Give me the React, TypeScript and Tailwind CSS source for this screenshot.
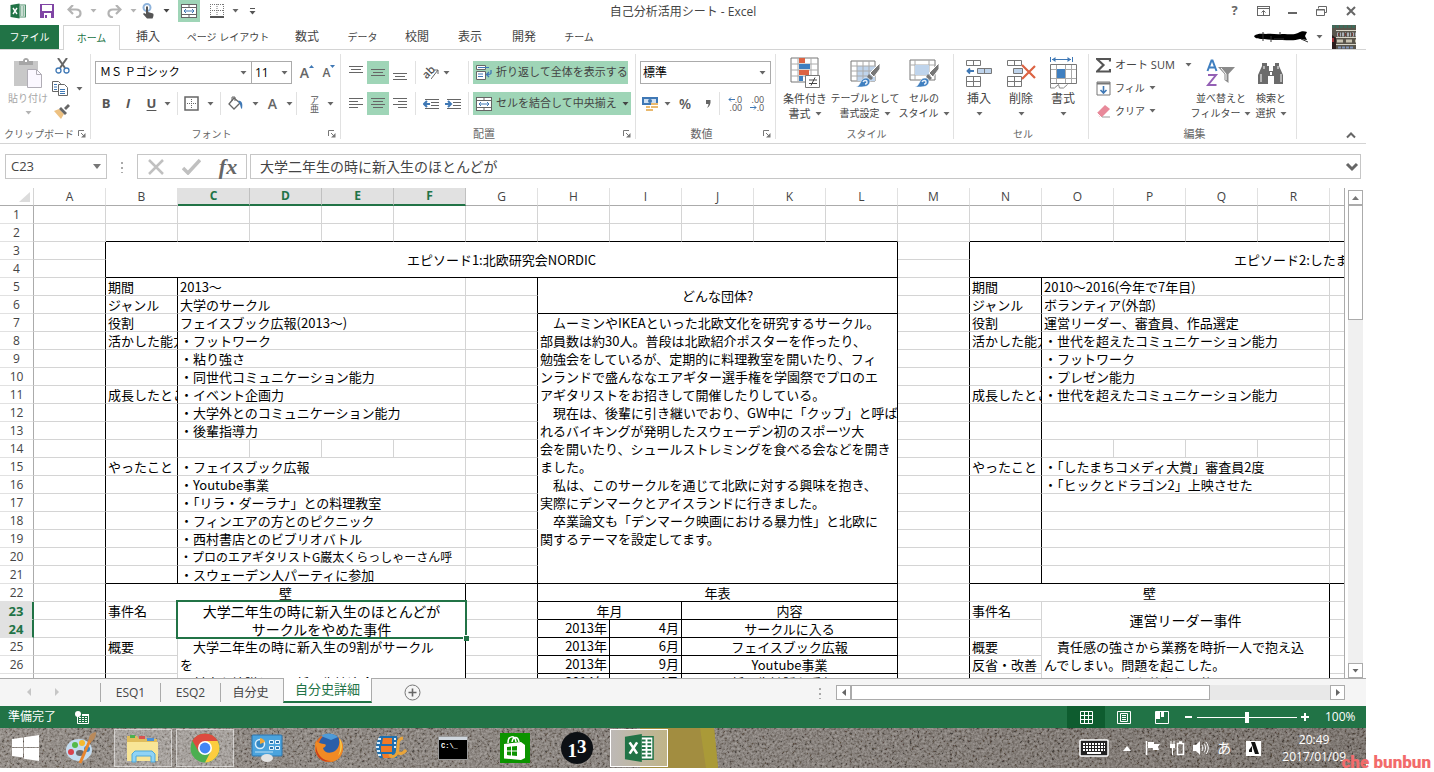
import type { ReactNode } from 'react';
import clsx from 'clsx';

const COLS = 'ABCDEFGHIJKLMNOPQRS'.split('');
const ROW_COUNT = 27;
const ROW_H = 18;

interface CellData {
  at: string;
  text: string;
  cols?: number;
  rows?: number;
  className?: string;
}

const about = [
  '　ムーミンやIKEAといった北欧文化を研究するサークル。',
  '部員数は約30人。普段は北欧紹介ポスターを作ったり、',
  '勉強会をしているが、定期的に料理教室を開いたり、フィ',
  'ンランドで盛んななエアギター選手権を学園祭でプロのエ',
  'アギタリストをお招きして開催したりしている。',
  '　現在は、後輩に引き継いでおり、GW中に「クッブ」と呼ば',
  'れるバイキングが発明したスウェーデン初のスポーツ大',
  '会を開いたり、シュールストレミングを食べる会などを開き',
  'ました。',
  '　私は、このサークルを通じて北欧に対する興味を抱き、',
  '実際にデンマークとアイスランドに行きました。',
  '　卒業論文も「デンマーク映画における暴力性」と北欧に',
  '関するテーマを設定してます。',
].join('\n');

const C = 'justify-center items-center text-center';
const R = 'justify-end items-end';

// Column C and column O hold one merged line per row
const episode1: [number, string][] = [
  [5, '2013～'],
  [6, '大学のサークル'],
  [7, 'フェイスブック広報(2013～)'],
  [8, '・フットワーク'],
  [9, '・粘り強さ'],
  [10, '・同世代コミュニケーション能力'],
  [11, '・イベント企画力'],
  [12, '・大学外とのコミュニケーション能力'],
  [13, '・後輩指導力'],
  [15, '・フェイスブック広報'],
  [16, '・Youtube事業'],
  [17, '・「リラ・ダーラナ」との料理教室'],
  [18, '・フィンエアの方とのピクニック'],
  [19, '・西村書店とのビブリオバトル'],
  [21, '・スウェーデン人パーティに参加'],
];

const episode2: [number, string][] = [
  [5, '2010～2016(今年で7年目)'],
  [6, 'ボランティア(外部)'],
  [7, '運営リーダー、審査員、作品選定'],
  [8, '・世代を超えたコミュニケーション能力'],
  [9, '・フットワーク'],
  [10, '・プレゼン能力'],
  [11, '・世代を超えたコミュニケーション能力'],
  [12, ''],
  [13, ''],
  [15, '・「したまちコメディ大賞」審査員2度'],
  [16, '・「ヒックとドラゴン2」上映させた'],
  [17, ''],
  [18, ''],
  [19, ''],
  [20, ''],
  [21, ''],
];

const labels: [number, string][] = [
  [5, '期間'],
  [6, 'ジャンル'],
  [7, '役割'],
  [8, '活かした能力'],
  [11, '成長したところ'],
  [15, 'やったこと'],
  [23, '事件名'],
  [25, '概要'],
];

const cells: CellData[] = [
  { at: 'B3', text: 'エピソード1:北欧研究会NORDIC', cols: 11, rows: 2, className: C },
  { at: 'N3', text: 'エピソード2:したま', cols: 6, rows: 2, className: 'items-center pl-[264px]' },
  { at: 'H5', text: 'どんな団体?', cols: 5, rows: 2, className: C },
  { at: 'H7', text: about, cols: 5, rows: 15 },
  { at: 'C20', text: '・プロのエアギタリストG巌太くらっしゃーさん呼', cols: 4, className: 'text-[12px]' },
  { at: 'B22', text: '壁', cols: 5, className: C },
  { at: 'H22', text: '年表', cols: 5, className: C },
  { at: 'N22', text: '壁', cols: 5, className: C },
  { at: 'C23', text: '大学二年生の時に新入生のほとんどが\nサークルをやめた事件', cols: 4, rows: 2, className: `${C} text-[14px]` },
  { at: 'O23', text: '運営リーダー事件', cols: 4, rows: 2, className: `${C} text-[14px]` },
  { at: 'C25', text: '　大学二年生の時に新入生の9割がサークル\nを\n　対応を協議して、新入生歓迎会', cols: 4, rows: 3 },
  { at: 'O25', text: '　責任感の強さから業務を時折一人で抱え込\nんでしまい。問題を起こした。\n　ある日問題点を共有し、仲間に', cols: 4, rows: 3 },
  { at: 'N26', text: '反省・改善' },
  { at: 'H23', text: '年月', cols: 2, className: C },
  { at: 'J23', text: '内容', cols: 3, className: C },
  ...[
    ['2013年', '4月', 'サークルに入る'],
    ['2013年', '6月', 'フェイスブック広報'],
    ['2013年', '9月', 'Youtube事業'],
    ['2014年', '4月', '新入生勧誘お手伝い'],
  ].flatMap(([year, month, what], i) => [
    { at: `H${24 + i}`, text: year, className: R },
    { at: `I${24 + i}`, text: month, className: R },
    { at: `J${24 + i}`, text: what, cols: 3, className: C },
  ]),
  ...labels.flatMap(([row, text]) => [
    { at: `B${row}`, text },
    { at: `N${row}`, text },
  ]),
  ...episode1.map(([row, text]) => ({ at: `C${row}`, text, cols: 4 })),
  ...episode2.map(([row, text]) => ({ at: `O${row}`, text, cols: 4 })),
];

// Black outlines: [first column, first row, last column, last row]
const outlines: [string, number, string, number][] = [
  ['B', 3, 'L', 4],
  ['B', 5, 'B', 21],
  ['B', 5, 'L', 21],
  ['H', 5, 'L', 6],
  ['H', 7, 'L', 21],
  ['B', 22, 'F', 40],
  ['H', 22, 'L', 22],
  ['H', 23, 'I', 23],
  ['J', 23, 'L', 23],
  ...[24, 25, 26, 27].flatMap((r): [string, number, string, number][] => [
    ['H', r, 'H', r],
    ['I', r, 'I', r],
    ['J', r, 'L', r],
  ]),
  ['N', 3, 'Z', 4],
  ['N', 5, 'N', 21],
  ['N', 5, 'Z', 21],
  ['N', 22, 'R', 40],
];

const colIndex = (letter: string) => letter.charCodeAt(0) - 65;
const cellMap = new Map(cells.map((c) => [c.at, c]));
const covered = new Set<string>();
cells.forEach((c) => {
  const col = colIndex(c.at[0]);
  const row = Number(c.at.slice(1));
  for (let r = row; r < row + (c.rows ?? 1); r++) {
    for (let k = col; k < col + (c.cols ?? 1); k++) {
      if (r !== row || k !== col) covered.add(`${COLS[k]}${r}`);
    }
  }
});

function hasRightLine(col: number, row: number) {
  return outlines.some(([c1, r1, c2, r2]) => row >= r1 && row <= r2 && (colIndex(c2) === col || colIndex(c1) === col + 1));
}

function hasBottomLine(col: number, row: number) {
  return outlines.some(([c1, r1, c2, r2]) => col >= colIndex(c1) && col <= colIndex(c2) && (r2 === row || r1 === row + 1));
}

function Caret({ className = 'text-[#666]' }: { className?: string }) {
  return (
    <svg width="7" height="4" viewBox="0 0 7 4" className={clsx('shrink-0', className)}>
      <path d="M0.5 0h6L3.5 3.6z" fill="currentColor" />
    </svg>
  );
}

function Svg({ w = 16, h = 16, box, children, className }: { w?: number; h?: number; box?: string; children: ReactNode; className?: string }) {
  return (
    <svg width={w} height={h} viewBox={box ?? `0 0 ${w} ${h}`} fill="none" className={clsx('shrink-0', className)}>
      {children}
    </svg>
  );
}

function ExcelLogo({ size }: { size: number }) {
  return (
    <Svg w={size} h={size} box="0 0 32 32">
      <rect x="17" y="4" width="14" height="24" fill="#fff" stroke="#217346" strokeWidth="1.6" />
      <path d="M19 8h4M25 8h4M19 12h4M25 12h4M19 16h4M25 16h4M19 20h4M25 20h4M19 24h4M25 24h4" stroke="#217346" strokeWidth="2" />
      <path d="M1 4l18-3v30L1 28z" fill="#217346" />
      <path d="M6 10l8 12M14 10L6 22" stroke="#fff" strokeWidth="2.8" />
    </Svg>
  );
}

function MergeIcon() {
  return (
    <Svg>
      <rect x="0.5" y="1.5" width="15" height="13" fill="#fff" stroke="#666" />
      <path d="M0 4.5h16M0 11.5h16M8 1v3M8 12v3" stroke="#666" />
      <path d="M3 8h10M5 6L3 8l2 2M11 6l2 2-2 2" stroke="#3f78b5" />
    </Svg>
  );
}

function QuickButton({ label, className, children }: { label: string; className: string; children: ReactNode }) {
  return (
    <button type="button" aria-label={label} className={clsx('flex h-[22px] items-center justify-center', className)}>
      {children}
    </button>
  );
}

function TitleBar() {
  return (
    <header className="grid h-[25px] grid-cols-[1fr_auto_1fr] items-start">
      <div className="flex items-center">
        <div className="flex w-9 justify-center"><ExcelLogo size={16} /></div>
        <QuickButton label="上書き保存" className="w-[22px]">
          <Svg w={14} h={14}>
            <path d="M0 0h14v14H0z" fill="#8045a5" />
            <path d="M2 1h10v6H2zM4 9h7v5H4z" fill="#fff" />
            <path d="M5 11h2v3H5z" fill="#8045a5" />
          </Svg>
        </QuickButton>
        <QuickButton label="元に戻す" className="ml-2 w-8 gap-2">
          <Svg w={15} h={13}>
            <path d="M6 0L1.500 4.500 6 9M2 4.500h7c6 0 6 7 0 8" stroke="#b3b3b3" strokeWidth="2.200" />
          </Svg>
          <Caret className="text-[#b3b3b3]" />
        </QuickButton>
        <QuickButton label="やり直し" className="ml-2 w-8 gap-2">
          <Svg w={15} h={13}>
            <path d="M9 0l4.500 4.500L9 9M13 4.500H6c-6 0-6 7 0 8" stroke="#b3b3b3" strokeWidth="2.200" />
          </Svg>
          <Caret className="text-[#b3b3b3]" />
        </QuickButton>
        <QuickButton label="タッチ/マウス" className="ml-1 w-7 gap-2">
          <Svg w={13} h={16}>
            <circle cx="5" cy="4.500" r="3.500" stroke="#8fb4dc" strokeWidth="2" />
            <path d="M4 3.500h2V9l5 1.500c1 .5.500 3-.5 5H5L1 11l1-1 2 1z" fill="#555" />
          </Svg>
          <Caret className="text-[#444]" />
        </QuickButton>
        <QuickButton label="セルを結合して中央揃え" className="ml-2 w-[22px] bg-[#9fd5b7]"><MergeIcon /></QuickButton>
        <QuickButton label="罫線" className="ml-2 w-8 gap-2">
          <Svg w={14} h={14}>
            <path d="M.5 0v13M13.500 0v13M7 0v13M0 .5h14M0 6.500h14" stroke="#777" strokeDasharray="1 1" />
            <path d="M0 13h14" stroke="#555" strokeWidth="2" />
          </Svg>
          <Caret />
        </QuickButton>
        <QuickButton label="クイック アクセス ツール バーのユーザー設定" className="w-6">
          <Svg w={7} h={8}>
            <path d="M1 1.500h5" stroke="#555" />
            <path d="M.5 4h6l-3 3.500z" fill="#555" />
          </Svg>
        </QuickButton>
      </div>
      <h1 className="pt-1 text-[12px] leading-4 text-[#444]">自己分析活用シート - Excel</h1>
      <div className="flex justify-end pr-px text-[#666]">
        <QuickButton label="ヘルプ" className="w-[29px] text-[13px] font-bold">?</QuickButton>
        <QuickButton label="リボンの表示オプション" className="w-[29px]">
          <Svg w={13} h={10}>
            <rect x="0.5" y="0.5" width="12" height="9" stroke="currentColor" />
            <path d="M0 2.500h13M6.500 9V5M4.500 6.500l2-2 2 2" stroke="currentColor" />
          </Svg>
        </QuickButton>
        <QuickButton label="最小化" className="w-[29px]"><Svg w={9} h={6}><path d="M0 5h9" stroke="currentColor" strokeWidth="2" /></Svg></QuickButton>
        <QuickButton label="元に戻す (縮小)" className="w-[29px]">
          <Svg w={11} h={10}>
            <path d="M2.500 2.500v-2h8v6h-2M.5 3.500h8v6h-8z" stroke="currentColor" />
            <path d="M0 4h9" stroke="currentColor" />
          </Svg>
        </QuickButton>
        <QuickButton label="閉じる" className="w-[29px]"><Svg w={10} h={10}><path d="M1 1l8 8M9 1L1 9" stroke="currentColor" strokeWidth="2" /></Svg></QuickButton>
      </div>
    </header>
  );
}

const ribbonTabs = [
  { name: '挿入', className: 'w-[56px] text-[12px]' },
  { name: 'ページ レイアウト', className: 'w-[104px] text-[10px]' },
  { name: '数式', className: 'w-[54px] text-[12px]' },
  { name: 'データ', className: 'w-[57px] text-[10px]' },
  { name: '校閲', className: 'w-[52px] text-[12px]' },
  { name: '表示', className: 'w-[54px] text-[12px]' },
  { name: '開発', className: 'w-[54px] text-[12px]' },
  { name: 'チーム', className: 'w-[56px] text-[10px]' },
];

function RibbonTabs() {
  return (
    <nav className="flex h-[25px] border-b border-[#d4d4d4]">
      <button type="button" className="w-[59px] bg-[#217346] text-[10px] text-white">ファイル</button>
      <button type="button" className="relative z-10 -mb-px ml-1 w-[57px] border border-b-0 border-[#d4d4d4] bg-white text-[10px] text-[#217346]">ホーム</button>
      {ribbonTabs.map((tab) => (
        <button key={tab.name} type="button" className={clsx('whitespace-nowrap', tab.className)}>{tab.name}</button>
      ))}
      <div className="ml-auto flex items-center gap-[7px] pr-[10px]">
        <Svg w={56} h={14}>
          <path d="M1 6c4-3 8-2 12-2 6-1 10 1 16 0 8 0 12 1 16-1 3-2 6-2 9-1l-2 4 2 4-7-1c-6 2-12 1-18 1-6 0-12 0-18-1-4 0-9 0-10-3z" fill="#000" />
          <path d="M10 2v9M18 6v6M21 9h10M27 2v3M48 9l7 3" stroke="#333" />
        </Svg>
        <Caret />
        <Svg w={24} h={24} className="ml-[2px]">
          <path d="M0 0h24v24H0z" fill="#5a564c" />
          <path d="M0 1.500h24" stroke="#3f6a5a" strokeWidth="3" strokeDasharray="3 1" />
          <path d="M4 5.500h20M4 12.500h20M4 19.500h20" stroke="#d9d6c8" />
          <path d="M5 9.500h19" stroke="#a9b0b8" strokeWidth="4" strokeDasharray="2 1 1 1" />
          <path d="M6 9.500h17" stroke="#7c3f3a" strokeWidth="3" strokeDasharray="1 6" />
          <path d="M5 16h19" stroke="#c9c4b2" strokeWidth="3" strokeDasharray="6 3" />
          <path d="M0 10l4 3v11H0z" fill="#2b1d1c" />
          <path d="M6 22.500h16" stroke="#7f93b8" strokeWidth="2" strokeDasharray="3 1" />
          <path d="M1 13v4" stroke="#a33439" strokeWidth="2" />
        </Svg>
      </div>
    </nav>
  );
}

function Group({ title, className, launcher, small, children }: { title: string; className: string; launcher?: boolean; small?: boolean; children: ReactNode }) {
  return (
    <section className={clsx('my-1 flex flex-col border-r border-[#e1e1e1]', className)}>
      <div className="flex-1">{children}</div>
      <div className="flex h-[10px] items-center justify-center text-[#666]">
        <span className={clsx('flex-1 whitespace-nowrap text-center', small ? 'text-[10px]' : 'text-[11px]')}>{title}</span>
        {launcher && (
          <button type="button" aria-label={`${title}の設定`} className="mr-1">
            <Svg w={8} h={8}>
              <path d="M.5 6V.5H6M3 3l3 3" stroke="#777" />
              <path d="M7.500 3v4.500H3z" fill="#777" />
            </Svg>
          </button>
        )}
      </div>
    </section>
  );
}

function Divider() {
  return <span className="h-[23px] w-px bg-[#e1e1e1]" />;
}

function Tool({ label, className, children }: { label: string; className?: string; children: ReactNode }) {
  return (
    <button type="button" aria-label={label} className={clsx('flex h-[23px] items-center justify-center', className)}>
      {children}
    </button>
  );
}

function Lines({ d }: { d: string }) {
  return <Svg w={14} h={14}><path d={d} stroke="#666" /></Svg>;
}

function BigButton({ lines, icon, className }: { lines: string[]; icon: ReactNode; className: string }) {
  return (
    <button type="button" className={clsx('flex flex-col items-center whitespace-nowrap leading-[15px]', className)}>
      <span className="flex h-[37px] items-center">{icon}</span>
      <span>{lines[0]}</span>
      <span className="flex h-[15px] items-center gap-1">
        {lines[1]}
        <Caret />
      </span>
    </button>
  );
}

function Brush() {
  return (
    <>
      <path d="M31 6l-10 10 4 4 6-8z" fill="#777" stroke="#fff" />
      <path d="M20 17l4 4-2 2-4-3z" fill="#777" />
      <path d="M7 30c5-1 4-9 10-9 5 0 5 6 1 8-3 1-7 1-11 1z" fill="#3f7fc0" stroke="#fff" strokeWidth="0.500" />
      <path d="M14 25c1-2 4-2 4 0 0 1-1 2-2 2" stroke="#e6effa" strokeWidth="1.500" />
    </>
  );
}

function ClipboardGroup() {
  return (
    <Group title="クリップボード" className="w-[91px]" launcher small>
      <div className="flex">
        <button type="button" className="flex w-[52px] flex-col items-center pl-1 pt-1 text-[10px] text-[#a6a6a6]">
          <Svg w={30} h={31}>
            <path d="M1 3h24v25H1z" fill="#c8c8c8" />
            <path d="M6 7V3h4c0-4 6-4 6 0h4v4z" fill="#a6a6a6" />
            <path d="M12 2h2v2h-2z" fill="#fff" />
            <path d="M14.500 11.500h9l5 5v13h-14z" fill="#fbf8ff" stroke="#b0adb5" />
            <path d="M23.500 11.500v5h5" stroke="#b0adb5" />
          </Svg>
          <span className="leading-[18px]">貼り付け</span>
          <Caret className="mt-1 text-[#b3b3b3]" />
        </button>
        <div className="flex flex-col">
          <Tool label="切り取り" className="w-5">
            <Svg w={15} h={16}>
              <path d="M3 0l7 10M12 0L5 10" stroke="#666" strokeWidth="2" />
              <circle cx="3.500" cy="12.500" r="2.500" stroke="#3f78b5" strokeWidth="1.300" />
              <circle cx="11.500" cy="12.500" r="2.500" stroke="#3f78b5" strokeWidth="1.300" />
            </Svg>
          </Tool>
          <Tool label="コピー" className="w-[30px] gap-2">
            <Svg w={16} h={15}>
              <path d="M.5.5h6l2 2v8h-8z" fill="#fff" stroke="#666" />
              <path d="M6.500 3.500h6l3 3v8h-9z" fill="#fff" stroke="#666" />
              <path d="M2 3.500h3M2 6h3M2 8.500h3M8 8.500h5M8 10.500h5M8 12.500h5" stroke="#3f78b5" />
            </Svg>
            <Caret />
          </Tool>
          <Tool label="書式のコピー/貼り付け" className="w-5">
            <Svg w={16} h={15}>
              <path d="M0 7l5-2 5 5-3 5z" fill="#edc181" />
              <path d="M5 5l2-2 6 6-2 2zM10 4l4-4 2 2-4 4z" fill="#666" />
            </Svg>
          </Tool>
        </div>
      </div>
    </Group>
  );
}

function FontGroup() {
  return (
    <Group title="フォント" className="w-[250px] pl-1" launcher small>
      <div className="flex flex-col gap-2 pt-[7px]">
        <div className="flex items-center">
          <label className="flex h-[23px] w-[157px] items-center border border-[#ababab] px-1">
            <input aria-label="フォント" defaultValue="ＭＳ Ｐゴシック" className="w-full min-w-0 text-[11px] text-black outline-none" />
            <Caret />
          </label>
          <label className="-ml-px flex h-[23px] w-[41px] items-center border border-[#ababab] px-[3px]">
            <input aria-label="フォント サイズ" defaultValue="11" className="w-full min-w-0 text-[12px] text-black outline-none" />
            <Caret />
          </label>
          <Tool label="フォント サイズの拡大" className="ml-1 w-[22px] text-[14px] font-semibold text-[#666]">
            A<Svg w={5} h={3} className="mb-3"><path d="M0 3h5L2.500 0z" fill="#3f78b5" /></Svg>
          </Tool>
          <Tool label="フォント サイズの縮小" className="w-[22px] text-[12px] font-semibold text-[#666]">
            A<Svg w={5} h={3} className="mb-3"><path d="M0 0h5L2.500 3z" fill="#3f78b5" /></Svg>
          </Tool>
        </div>
        <div className="flex items-center text-[13px] text-[#555]">
          <Tool label="太字" className="w-[22px] font-bold">B</Tool>
          <Tool label="斜体" className="w-[22px] font-bold italic">I</Tool>
          <Tool label="下線" className="w-[36px] gap-2 pl-1 font-bold"><span className="underline underline-offset-2">U</span><Caret /></Tool>
          <span className="w-[2px]" />
          <Divider />
          <Tool label="罫線" className="w-[42px] gap-2">
            <Svg w={15} h={15}>
              <rect x="1" y="1" width="13" height="13" stroke="#666" strokeWidth="1.500" />
              <path d="M7.500 3v10M3 7.500h10" stroke="#666" strokeDasharray="1 1" />
            </Svg>
            <Caret />
          </Tool>
          <Divider />
          <Tool label="塗りつぶしの色" className="w-[44px] gap-2">
            <Svg w={16} h={15}>
              <path d="M6 2l6 5-6 6-5-5z" fill="#fff" stroke="#666" strokeWidth="1.300" />
              <path d="M4 5V1h3v4" stroke="#666" />
              <path d="M10 5c4-1 5 3 4 8-2-1-1-5-4-8z" fill="#3f78b5" />
            </Svg>
            <Caret />
          </Tool>
          <Tool label="フォントの色" className="w-[31px] gap-[9px] text-[14px] font-semibold text-[#666]">A<Caret /></Tool>
          <Divider />
          <Tool label="ふりがなの表示/非表示" className="w-[42px] gap-2 pl-2">
            <span className="flex flex-col text-[9px] leading-[9px]"><span>ア</span><span>亜</span></span>
            <Caret />
          </Tool>
        </div>
      </div>
    </Group>
  );
}

function AlignGroup() {
  return (
    <Group title="配置" className="w-[295px] pl-1" launcher>
      <div className="flex flex-col gap-2 pt-[7px]">
        <div className="flex items-center">
          <Tool label="上揃え" className="w-[22px]"><Lines d="M0 .5h14M2 3.500h10M0 6.500h14" /></Tool>
          <Tool label="上下中央揃え" className="w-[22px] bg-[#9fd5b7]"><Lines d="M0 3.500h14M2 6.500h10M0 9.500h14" /></Tool>
          <Tool label="下揃え" className="w-[22px]"><Lines d="M0 7.500h14M2 10.500h10M0 13.500h14" /></Tool>
          <span className="w-1" />
          <Divider />
          <Tool label="方向" className="w-[52px] gap-1 pr-3">
            <span className="-rotate-45 text-[11px] font-semibold text-[#555]">ab</span>
            <Svg w={8} h={14} className="-ml-2"><path d="M0 13l7-9M3 4h4v4" stroke="#666" /></Svg>
            <Caret />
          </Tool>
          <Divider />
          <button type="button" className="ml-1 flex h-[23px] w-[155px] items-center gap-1 whitespace-nowrap bg-[#9fd5b7] pl-[3px] text-[11px]">
            <Svg>
              <path d="M.5.5h9v4h-9zM.5 6.500h9v8h-9z" fill="#fff" stroke="#666" />
              <path d="M2 2.500h11M2 9h5M2 11.500h5" stroke="#3f78b5" />
              <path d="M15 5v3c0 1-1 1.500-4 1.500M13 7l-2.500 2.500L13 12" stroke="#3f78b5" strokeWidth="1.300" />
            </Svg>
            折り返して全体を表示する
          </button>
        </div>
        <div className="flex items-center">
          <Tool label="左揃え" className="w-[22px]"><Lines d="M0 1.500h14M0 4.500h9M0 7.500h14M0 10.500h9" /></Tool>
          <Tool label="中央揃え" className="w-[22px] bg-[#9fd5b7]"><Lines d="M0 1.500h14M2 4.500h10M0 7.500h14M2 10.500h10" /></Tool>
          <Tool label="右揃え" className="w-[22px]"><Lines d="M0 1.500h14M5 4.500h9M0 7.500h14M5 10.500h9" /></Tool>
          <span className="w-1" />
          <Divider />
          <Tool label="インデントを減らす" className="ml-1 w-[22px]">
            <Svg w={16} h={12}><path d="M2 1.500h14M8 4.500h8M8 7.500h8M2 10.500h14" stroke="#666" /><path d="M7 6H1M4 3L1 6l3 3" stroke="#3f78b5" strokeWidth="2" /></Svg>
          </Tool>
          <Tool label="インデントを増やす" className="w-[22px]">
            <Svg w={16} h={12}><path d="M2 1.500h14M8 4.500h8M8 7.500h8M2 10.500h14" stroke="#666" /><path d="M0 6h6M3 3l3 3-3 3" stroke="#3f78b5" strokeWidth="2" /></Svg>
          </Tool>
          <span className="w-1" />
          <Divider />
          <button type="button" className="ml-1 flex h-[23px] w-[158px] items-center gap-1 whitespace-nowrap bg-[#9fd5b7] pl-[3px] text-[11px]">
            <MergeIcon />
            セルを結合して中央揃え
            <Caret className="ml-px text-[#444]" />
          </button>
        </div>
      </div>
    </Group>
  );
}

function NumberGroup() {
  return (
    <Group title="数値" className="w-[140px] pl-1" launcher>
      <div className="flex flex-col gap-2 pt-[7px]">
        <div className="flex h-[23px] w-[131px] items-center border border-[#ababab] pr-1">
          <select aria-label="表示形式" className="w-full appearance-none pl-[2px] text-[12px] text-black outline-none">
            <option>標準</option>
          </select>
          <Caret />
        </div>
        <div className="flex items-center text-[#555]">
          <Tool label="通貨表示形式" className="w-[33px] gap-[5px]">
            <Svg w={17} h={16}>
              <path d="M0 1h16v8H0z" fill="#3f78b5" />
              <path d="M2 3h12v4H2z" fill="#cfe0f2" />
              <circle cx="8" cy="5" r="2" fill="#3f78b5" />
              <path d="M9 7h7v2H9zM9 10h7v2H9zM4 10h4v2H4zM4 13h7v2H4z" fill="#e9b96e" />
            </Svg>
            <Caret />
          </Tool>
          <Tool label="パーセント スタイル" className="w-6 text-[14px] font-semibold">%</Tool>
          <Tool label="桁区切りスタイル" className="w-[22px]">
            <Svg w={5} h={8}><path d="M0 0h4.500c.500 4-1 6.500-3.500 8 1-2 1.500-3 1.500-4H0z" fill="#666" /></Svg>
          </Tool>
          <Divider />
          <Tool label="小数点以下の表示桁数を増やす" className="ml-1 w-[22px]">
            <span className="flex flex-col items-end text-[9px] leading-[8px]">
              <span className="flex items-center"><Svg w={7} h={5}><path d="M7 2.500H1M3 .5l-2 2 2 2" stroke="#3f78b5" /></Svg>.0</span>
              <span>.00</span>
            </span>
          </Tool>
          <Tool label="小数点以下の表示桁数を減らす" className="w-[22px]">
            <span className="flex flex-col items-end text-[9px] leading-[8px]">
              <span>.00</span>
              <span className="flex items-center"><Svg w={7} h={5}><path d="M0 2.500h6M4 .5l2 2-2 2" stroke="#3f78b5" /></Svg>.0</span>
            </span>
          </Tool>
        </div>
      </div>
    </Group>
  );
}

function StyleGroup() {
  return (
    <Group title="スタイル" className="w-[178px] pl-1" small>
      <div className="flex">
        <BigButton
          className="w-[50px] text-[11px]"
          lines={['条件付き', '書式']}
          icon={
            <Svg w={31} h={31}>
              <path d="M1 1h27v24H1z" fill="#fff" stroke="#777" />
              <path d="M1 7h27M1 13h27M1 19h27M8 1v24M21 1v24" stroke="#aaa" />
              <path d="M9 1h6v5H9zM9 13h10v5H9z" fill="#dc6343" />
              <path d="M9 7h11v5H9zM9 19h4v5H9z" fill="#3f7fc0" />
              <path d="M15.500 18.500h14v12h-14z" fill="#fff" stroke="#777" />
              <path d="M19 23h8M19 26.500h8M25 20.500l-4 8" stroke="#444" />
            </Svg>
          }
        />
        <BigButton
          className="w-[70px] text-[10px]"
          lines={['テーブルとして', '書式設定']}
          icon={
            <Svg w={32} h={32}>
              <path d="M2 4h24v20H2z" fill="#fff" stroke="#777" />
              <path d="M8 9h18v15H8z" fill="#bfd4ec" />
              <path d="M2 9h24M2 14h24M2 19h24M8 4v20M14 4v20M20 4v20" stroke="#aaa" />
              <Brush />
            </Svg>
          }
        />
        <BigButton
          className="w-[48px] text-[10px]"
          lines={['セルの', 'スタイル']}
          icon={
            <Svg w={32} h={32}>
              <path d="M2 3h25v20H2z" fill="#fff" stroke="#777" />
              <path d="M2 8h25M2 18h25M7 3v20M21 3v20" stroke="#aaa" />
              <path d="M7 8h14v10H7z" fill="#bfd4ec" />
              <Brush />
            </Svg>
          }
        />
      </div>
    </Group>
  );
}

function CellsGroup() {
  return (
    <Group title="セル" className="w-[135px] pl-1" small>
      <div className="flex">
        <BigButton
          className="w-[42px] text-[12px]"
          lines={['挿入', '']}
          icon={
            <Svg w={28} h={30}>
              <path d="M1.500 2.500h14v5h-14zM8.500 2.500v5M1.500 18.500h14v10h-14zM1.500 23.500h14M8.500 18.500v10" stroke="#777" />
              <path d="M12.500 10.500h14v5h-14z" fill="#bfd4ec" stroke="#777" />
              <path d="M19.500 10.500v5" stroke="#777" />
              <path d="M9 13H3M5 10.500L2.500 13 5 15.500" stroke="#3f78b5" strokeWidth="1.800" />
            </Svg>
          }
        />
        <BigButton
          className="w-[42px] text-[12px]"
          lines={['削除', '']}
          icon={
            <Svg w={30} h={30}>
              <path d="M1.500 2.500h14v5h-14zM8.500 2.500v5M1.500 18.500h14v10h-14zM1.500 23.500h14M8.500 18.500v10" stroke="#777" />
              <path d="M7.500 10.500h9v5h-9z" fill="#bfd4ec" stroke="#777" />
              <path d="M16 7l13 13M29 8L16 21" stroke="#dc6343" strokeWidth="2.200" />
            </Svg>
          }
        />
        <BigButton
          className="w-[42px] text-[12px]"
          lines={['書式', '']}
          icon={
            <Svg w={29} h={33}>
              <path d="M1.500 1v5M23.500 1v5M3 3.500h19" stroke="#3f78b5" />
              <path d="M3 3.500L6.500 1v5zM22 3.500L18.500 1v5z" fill="#3f78b5" />
              <path d="M1.500 8.500h26v19h-26z" fill="#fff" stroke="#777" />
              <path d="M2 13.500h25M2 22.500h25M7.500 9v18M16.500 9v18M22.500 9v18" stroke="#aaa" />
              <path d="M8 13h8v9H8z" fill="#3f7fc0" />
              <path d="M1.500 28v4h4l4-3.500 1 3.500h4l4-3.500" stroke="#888" />
            </Svg>
          }
        />
      </div>
    </Group>
  );
}

function EditGroup() {
  return (
    <Group title="編集" className="w-[208px] pl-1">
      <div className="flex">
        <div className="flex w-[100px] flex-col pl-[3px] text-[11px]">
          <button type="button" className="flex h-[22px] items-center gap-1">
            <Svg w={15} h={15}><path d="M14 3.500V1H1l6.500 6L1 13.500h13V11" stroke="#555" strokeWidth="2.200" /></Svg>
            <span className="w-[66px] whitespace-nowrap text-left">オート SUM</span>
            <Caret />
          </button>
          <button type="button" className="flex h-6 items-center gap-1">
            <Svg w={15} h={15}>
              <path d="M1 1h13v13H1z" fill="#fff" stroke="#777" />
              <path d="M1 2.500h13" stroke="#777" strokeWidth="2" />
              <path d="M7.500 5v7M4.500 9l3 3 3-3" stroke="#3f78b5" strokeWidth="1.600" />
            </Svg>
            <span className="text-[10px]">フィル</span>
            <Caret />
          </button>
          <button type="button" className="flex h-[22px] items-center gap-1">
            <Svg w={15} h={14}>
              <path d="M1 9l8-8 5 4-8 8H4z" fill="#e8899a" />
              <path d="M1 9l4 4" stroke="#fff" />
              <path d="M6 13h8" stroke="#999" />
            </Svg>
            <span className="text-[10px]">クリア</span>
            <Caret />
          </button>
        </div>
        <BigButton
          className="w-[56px] text-[10px]"
          lines={['並べ替えと', 'フィルター']}
          icon={
            <Svg w={30} h={28}>
              <path d="M1.500 12L5.500 1.500h1L10.500 12M3 8.500h6" stroke="#3f7fc0" strokeWidth="2" />
              <path d="M2 16h8L2 26h8.500" stroke="#9460b5" strokeWidth="2" />
              <path d="M12 8h17l-6.500 7v9l-4-3v-6z" fill="#8a8a8a" />
              <path d="M15 9l5 6v6" stroke="#fff" />
            </Svg>
          }
        />
        <BigButton
          className="w-[44px] text-[10px]"
          lines={['検索と', '選択']}
          icon={
            <Svg w={28} h={26}>
              <path d="M6 3h4v3h2v5h4V6h2V3h4v3l4 9v9h-9v-8h-6v8H1v-9l4-9V3z" fill="#6b6b6b" />
              <path d="M4 14v8M24 14v8M7 6v3M21 6v3" stroke="#fff" />
              <path d="M14 12v3" stroke="#fff" strokeWidth="2" />
            </Svg>
          }
        />
      </div>
    </Group>
  );
}

function FormulaBar() {
  return (
    <div className="flex h-[44px] items-center pl-[5px] pr-[5px] pt-px">
      <label className="flex h-[25px] w-[102px] items-center border border-[#c6c6c6] px-[5px]">
        <input aria-label="名前ボックス" defaultValue="C23" className="w-full min-w-0 text-[13px] outline-none" />
        <Svg w={8} h={5}><path d="M0 0h8L4 5z" fill="#777" /></Svg>
      </label>
      <Svg w={30} h={12}><path d="M15 1v11" stroke="#aaa" strokeWidth="2" strokeDasharray="2 3" /></Svg>
      <div className="flex h-[25px] w-[110px] items-center justify-around border border-[#c6c6c6]">
        <button type="button" aria-label="キャンセル">
          <Svg w={18} h={16}><path d="M2 1l14 14M16 1L2 15" stroke="#c0c0c0" strokeWidth="2.500" /></Svg>
        </button>
        <button type="button" aria-label="入力">
          <Svg w={19} h={16}><path d="M1 9l5 5L18 1" stroke="#c0c0c0" strokeWidth="3.500" /></Svg>
        </button>
        <button type="button" aria-label="関数の挿入" className="font-['Liberation_Serif',serif] text-[22px] font-bold italic leading-5 text-[#666]">fx</button>
      </div>
      <label className="ml-[3px] flex h-[25px] flex-1 items-center border border-[#c6c6c6] pl-[9px]">
        <input aria-label="数式バー" defaultValue="大学二年生の時に新入生のほとんどが" className="flex-1 text-[14px] outline-none" />
        <Svg w={14} h={10} className="mr-px"><path d="M2 2l5 5 5-5" stroke="#666" strokeWidth="3" /></Svg>
      </label>
    </div>
  );
}

function SheetCell({ col, row }: { col: number; row: number }) {
  const at = `${COLS[col]}${row}`;
  if (covered.has(at)) return null;
  const cell = cellMap.get(at);
  const colSpan = cell?.cols ?? 1;
  const rowSpan = cell?.rows ?? 1;
  const right = hasRightLine(col + colSpan - 1, row);
  const bottom = hasBottomLine(col, row + rowSpan - 1);

  return (
    <td
      colSpan={colSpan}
      rowSpan={rowSpan}
      className={clsx(
        'relative border-b border-r p-0',
        right ? 'border-r-black' : 'border-r-[#d4d4d4]',
        bottom ? 'border-b-black' : 'border-b-[#d4d4d4]',
      )}
    >
      {cell && (
        <div
          className={clsx('flex overflow-hidden whitespace-pre px-[2px] leading-[18px]', cell.className)}
          style={{ height: rowSpan * ROW_H - 1 }}
        >
          {cell.text}
        </div>
      )}
      {at === 'C23' && (
        <span className="absolute -inset-[2px] z-10 border-2 border-[#217346]">
          <span className="absolute -bottom-1 -right-1 size-[6px] border-l border-t border-white bg-[#217346]" />
        </span>
      )}
    </td>
  );
}

function Sheet() {
  return (
    <main className="flex min-h-0 flex-1">
      <div className="min-w-0 flex-1 overflow-hidden">
        <table className="w-[1402px] table-fixed border-separate border-spacing-0 font-['Noto_Sans_CJK_JP',sans-serif] text-[13px] text-black">
          <colgroup>
            <col className="w-[34px]" />
            {COLS.map((c) => <col key={c} className="w-[72px]" />)}
          </colgroup>
          <thead>
            <tr className="h-[18px] font-['Open_Sans',sans-serif] text-[12px] leading-4 text-[#444]">
              <th className="border-b border-r border-b-[#ababab] border-r-[#d4d4d4] p-0" aria-label="すべて選択">
                <Svg w={11} h={10} className="ml-[19px]"><path d="M11 0v10H0z" fill="#dcdcdc" /></Svg>
              </th>
              {COLS.map((c) => {
                const selected = c >= 'C' && c <= 'F';
                return (
                  <th
                    key={c}
                    scope="col"
                    className={clsx(
                      'h-[18px] border-r p-0',
                      selected ? 'border-b-2 border-b-[#217346] border-r-[#c0c0c0] bg-[#e1e1e1] font-bold text-[#217346]' : 'border-b border-b-[#ababab] border-r-[#e1e1e1] font-normal',
                    )}
                  >
                    <div className="h-4 overflow-hidden">{c === 'S' ? '' : c}</div>
                  </th>
                );
              })}
            </tr>
          </thead>
          <tbody>
            {Array.from({ length: ROW_COUNT }, (_, i) => i + 1).map((row) => {
              const selected = row === 23 || row === 24;
              return (
                <tr key={row} className="h-[18px]">
                  <th
                    scope="row"
                    className={clsx(
                      "h-[18px] border-b border-b-[#e1e1e1] p-0 font-['Open_Sans',sans-serif] leading-4",
                      selected ? 'border-r-2 border-r-[#217346] bg-[#e1e1e1] text-[13px] font-bold text-[#217346]' : 'border-r border-r-[#ababab] text-[12px] font-normal text-[#444]',
                    )}
                  >
                    <div className="h-[17px] pt-px">{row}</div>
                  </th>
                  {COLS.map((c, col) => <SheetCell key={c} col={col} row={row} />)}
                </tr>
              );
            })}
          </tbody>
        </table>
      </div>
      <div className="flex w-[22px] flex-col border-l border-[#ababab] pl-[3px] pr-[3px] pt-[2px]">
        <button type="button" aria-label="上へスクロール" className="flex h-[15px] items-center justify-center border border-[#ababab]">
          <Svg w={7} h={4}><path d="M0 4h7L3.500 0z" fill="#777" /></Svg>
        </button>
        <div className="flex-1 bg-[#f0f0f0]"><div className="h-[115px] border border-[#ababab] bg-white" /></div>
        <button type="button" aria-label="下へスクロール" className="flex h-[15px] items-center justify-center border border-[#ababab]"><Caret /></button>
      </div>
    </main>
  );
}

function SheetTabs() {
  return (
    <div className="flex h-7 items-start border-t border-[#ababab] bg-[#f5f5f5] text-[12px] text-[#444]">
      <button type="button" aria-label="前のシート" className="flex h-[25px] w-[43px] items-center justify-end pr-3"><Svg w={4} h={8}><path d="M4 0v8L0 4z" fill="#c6c6c6" /></Svg></button>
      <button type="button" aria-label="次のシート" className="flex h-[25px] w-[57px] items-center pl-3"><Svg w={4} h={8}><path d="M0 0v8l4-4z" fill="#c6c6c6" /></Svg></button>
      {['ESQ1', 'ESQ2', '自分史'].map((name) => (
        <button key={name} type="button" className="mt-1 h-[19px] w-[60px] border-l border-[#ababab]">{name}</button>
      ))}
      <button type="button" className="-mt-px ml-[3px] h-[25px] w-[89px] border-x border-b-2 border-x-[#ababab] border-b-[#217346] bg-white text-[13px] text-[#217346]">自分史詳細</button>
      <button type="button" aria-label="新しいシート" className="ml-8 mt-[5px]">
        <Svg w={17} h={17}><circle cx="8.500" cy="8.500" r="7.500" stroke="#777" /><path d="M4.500 8.500h8M8.500 4.500v8" stroke="#666" strokeWidth="1.600" /></Svg>
      </button>
      <div className="ml-auto mr-[21px] mt-[6px] flex w-[527px] items-center">
        <Svg w={18} h={12}><path d="M2 1v11" stroke="#aaa" strokeWidth="2" strokeDasharray="2 3" /></Svg>
        <button type="button" aria-label="左へスクロール" className="flex size-[15px] items-center justify-center border border-[#ababab] bg-white"><Svg w={4} h={7}><path d="M4 0v7L0 3.500z" fill="#666" /></Svg></button>
        <div className="h-[15px] flex-1 bg-[#e8e8e8]"><div className="h-full w-3/4 border border-[#ababab] bg-white" /></div>
        <button type="button" aria-label="右へスクロール" className="flex size-[15px] items-center justify-center border border-[#ababab] bg-white"><Svg w={4} h={7}><path d="M0 0v7l4-3.500z" fill="#666" /></Svg></button>
      </div>
    </div>
  );
}

function StatusBar() {
  return (
    <div className="flex h-[22px] items-center bg-[#217346] pl-2 pr-2 text-[12px] text-white">
      <span>準備完了</span>
      <Svg w={14} h={13} className="ml-[19px]">
        <path d="M2.500 4v8.500h11v-9H7" stroke="#fff" />
        <path d="M4 6.500h9M4 8.500h9M4 10.500h9" stroke="#fff" strokeDasharray="2 1" />
        <path d="M7 3h7v2H7z" fill="#fff" />
        <circle cx="3" cy="3" r="3" fill="#fff" />
      </Svg>
      <div className="ml-auto flex h-full items-center">
        <button type="button" aria-label="標準" className="flex h-full w-[38px] items-center justify-center bg-[#0e5c2f]">
          <Svg w={13} h={13}><path d="M.5.5h12v12H.5zM.5 4.500h12M.5 8.500h12M4.500.5v12M8.500.5v12" stroke="#fff" /></Svg>
        </button>
        <button type="button" aria-label="ページ レイアウト" className="flex h-full w-[38px] items-center justify-center">
          <Svg w={14} h={13}><path d="M.5.5h13v12H.5zM3.500 2.500h7v8h-7zM5 4.500h4M5 6.500h4M5 8.500h4" stroke="#fff" /></Svg>
        </button>
        <button type="button" aria-label="改ページ プレビュー" className="flex h-full w-[38px] items-center justify-center">
          <Svg w={14} h={13}><path d="M.5.5h13v12H.5z" stroke="#fff" /><path d="M1 1h4v7H1zM6 1h3v5H6z" fill="#fff" /></Svg>
        </button>
        <button type="button" aria-label="縮小" className="mx-px flex w-3 justify-center"><Svg w={7} h={8}><path d="M0 4h7" stroke="#fff" strokeWidth="2" /></Svg></button>
        <input
          type="range"
          aria-label="ズーム"
          defaultValue={50}
          className="ml-[2px] h-px w-[100px] appearance-none bg-white [&::-webkit-slider-thumb]:h-[11px] [&::-webkit-slider-thumb]:w-1 [&::-webkit-slider-thumb]:appearance-none [&::-webkit-slider-thumb]:bg-white"
        />
        <button type="button" aria-label="拡大" className="ml-1 flex w-2 justify-center"><Svg w={8} h={8}><path d="M0 4h8M4 0v8" stroke="#fff" strokeWidth="2" /></Svg></button>
        <span className="ml-4 w-[33px] text-[12px]">100%</span>
      </div>
    </div>
  );
}

const taskItems: { name: string; open?: boolean; icon: ReactNode }[] = [
  {
    name: 'ペイント',
    icon: (
      <Svg w={32} h={32}>
        <ellipse cx="14" cy="18" rx="13" ry="11" fill="#c4dcef" />
        <ellipse cx="15" cy="21" rx="4" ry="3" fill="#6c6a6c" />
        <circle cx="6" cy="20" r="3" fill="#d9434c" />
        <circle cx="10" cy="13" r="3" fill="#54b948" />
        <circle cx="17" cy="11" r="3" fill="#f5b92f" />
        <circle cx="22" cy="17" r="3" fill="#3b82c4" />
        <path d="M26 6L15 31" stroke="#e8862e" strokeWidth="3" />
        <path d="M24 8c0-5 2-7 7-8 0 5-2 8-5 10z" fill="#b98a5b" />
      </Svg>
    ),
  },
  {
    name: 'エクスプローラー',
    open: true,
    icon: (
      <Svg w={32} h={30}>
        <path d="M0 3h10l2 3h18v22H0z" fill="#e0bd5c" />
        <path d="M0 9h31v19H0z" fill="#f8e596" />
        <path d="M3 2h5v3H3z" fill="#4caf50" />
        <path d="M12 3h6v3h-6z" fill="#d9534f" />
        <path d="M20 5h7v3h-7z" fill="#4a90d9" />
        <path d="M5 29v-8l3-3h17l3 3v8h-4v-6H9v6z" fill="#8fd3f5" stroke="#4fa9d8" />
      </Svg>
    ),
  },
  {
    name: 'Google Chrome',
    open: true,
    icon: (
      <Svg w={30} h={30}>
        <circle cx="15" cy="15" r="14.500" fill="#4caf50" />
        <path d="M15 15L2.400 7.800A14.500 14.500 0 0 1 27.600 7.800z" fill="#dd4b3e" />
        <path d="M15 8h12.600A14.500 14.500 0 0 1 15 29.500L21 18z" fill="#fccd3f" />
        <path d="M2.400 7.800L9 19l6-4 0-7z" fill="#dd4b3e" />
        <circle cx="15" cy="15" r="7" fill="#fff" />
        <circle cx="15" cy="15" r="5.400" fill="#4285f4" />
      </Svg>
    ),
  },
  {
    name: 'コントロール パネル',
    icon: (
      <Svg w={32} h={30}>
        <rect x="1" y="2" width="30" height="21" rx="1" fill="#4ba3dd" stroke="#2d75ad" />
        <circle cx="9" cy="11" r="4.500" fill="#3588c4" stroke="#d9eefb" strokeWidth="1.500" />
        <path d="M9 11V5a6 6 0 0 1 5 4z" fill="#f4a938" />
        <path d="M18.500 7.500h4v3h-4zM24.500 7.500h4v3h-4zM18.500 13.500h4v3h-4zM24.500 13.500h4v3h-4z" fill="#2d75ad" stroke="#eaf6fd" />
        <path d="M4 19h18" stroke="#bfe1f5" />
        <ellipse cx="16" cy="25" rx="6" ry="4" fill="#e3e3e3" />
      </Svg>
    ),
  },
  {
    name: 'Firefox',
    icon: (
      <Svg w={32} h={32}>
        <circle cx="16" cy="16" r="14" fill="#e66a1f" />
        <circle cx="17" cy="13" r="11" fill="#2a5ea8" />
        <path d="M8 4c5-4 13-3 17 1l-7 3z" fill="#4e9bd8" />
        <path d="M3 8c1 3 4 3 8 4 3 0 2 3-1 4 1 5 7 6 12 3 4-3 5-8 4-13 4 4 5 10 3 15-3 9-13 11-20 7S1 15 3 8z" fill="#f08a24" />
        <path d="M26 6c4 4 4 13-1 18 3-6 3-12 1-18z" fill="#fbd04a" />
        <path d="M3 14c1 9 7 15 15 15C9 32 1 23 3 14z" fill="#c93d1d" />
      </Svg>
    ),
  },
  {
    name: 'ムービー メーカー',
    icon: (
      <Svg w={32} h={28}>
        <path d="M5 2h17v22H5c-5-6-5-16 0-22z" fill="#1e6fae" />
        <path d="M8 4h9v6H7zM6 12h11v6H6zM7 20h10v4H8z" fill="#f07a26" />
        <path d="M3 5h3M2 9h3M1 13h3M2 17h3M3 21h3M19 5h2M19 9h2M19 13h2" stroke="#d7ecfa" strokeWidth="2" />
        <path d="M28 4c-7 1-4 9-6 15-2 5-7 4-7 1M22 17c2 4 6 3 9-1" stroke="#e9a53a" strokeWidth="3" />
      </Svg>
    ),
  },
  {
    name: 'コマンド プロンプト',
    icon: (
      <span className="flex h-6 w-[30px] flex-col border border-[#9a9a9a] bg-black font-['Liberation_Mono',monospace] text-[7px] leading-[9px] text-white">
        <span className="h-[3px] bg-[#cfd6dd]" />
        <span className="pl-[2px] pt-[2px] text-left font-bold">C:\_</span>
      </span>
    ),
  },
  {
    name: 'ストア',
    icon: (
      <Svg w={30} h={30}>
        <path d="M0 0h30v30H0z" fill="#0c9300" />
        <path d="M4 11l17-2 4 3v13l-4 2-17-1.500z" fill="#fff" />
        <path d="M8 10c0-8 7-8 8-1M12 9c1-6 6-6 7 0" stroke="#fff" strokeWidth="1.500" />
        <path d="M7 14l4-.5v4H7zM12 13.500l5-.5v4.500h-5zM7 18.500h4v4l-4-.5zM12 18.500h5V23l-5-.5z" fill="#0c9300" />
      </Svg>
    ),
  },
  {
    name: '13',
    icon: (
      <span className="flex size-8 items-center justify-center rounded-full bg-[#0d1014] font-['Liberation_Serif',serif] text-[19px] font-bold leading-none text-white">
        <span className="pt-1">1</span><span className="pb-1">3</span>
      </span>
    ),
  },
];

function Taskbar() {
  return (
    <footer className="relative flex h-10 items-center overflow-hidden bg-linear-to-r from-[#857e78] via-[#77706b] to-[#635b55]">
      <svg className="absolute inset-0 size-full" aria-hidden="true">
        <filter id="grain">
          <feTurbulence type="fractalNoise" baseFrequency="0.4" numOctaves="3" />
          <feColorMatrix type="matrix" values="1.6 0 0 0 -0.38  1.6 0 0 0 -0.4  1.6 0 0 0 -0.42  0 0 0 0 0.35" />
        </filter>
        <rect width="100%" height="100%" filter="url(#grain)" />
        <path d="M640 0h74l4 40h-78z" fill="#a28d40" />
        <path d="M700 0h14l4 40h-12z" fill="#aa9a38" />
      </svg>
      <div className="relative flex h-full items-center">
        <button type="button" aria-label="スタート" className="flex w-[50px] justify-center">
          <Svg w={27} h={26}><path d="M0 4l11-1.500V12H0zM12 2.300L27 0v12H12zM0 13h11v9.500L0 21zM12 13h15v13l-15-2.300z" fill="#fff" /></Svg>
        </button>
        {taskItems.map((item) => (
          <button
            key={item.name}
            type="button"
            aria-label={item.name}
            className={clsx('mx-[2px] flex h-[38px] w-[58px] items-center justify-center', item.open && 'border border-white/50 bg-white/20')}
          >
            {item.icon}
          </button>
        ))}
        <button type="button" aria-label="Excel" className="ml-[2px] flex h-[38px] w-[58px] items-center justify-center border border-white bg-linear-to-r from-[#bdb9b6] to-[#c0b488]">
          <ExcelLogo size={30} />
        </button>
      </div>
      <div className="relative ml-auto flex items-center text-white">
        <Svg w={30} h={18}>
          <rect x="1" y="1" width="28" height="16" rx="1" fill="#222" stroke="#fff" strokeWidth="1.500" />
          <path d="M4 5h22M4 8h22M4 11h22" stroke="#fff" strokeWidth="2" strokeDasharray="2 1" />
          <path d="M8 14h14" stroke="#fff" strokeWidth="2" />
        </Svg>
        <Svg w={8} h={5} className="ml-[14px]"><path d="M0 5h8L4 0z" fill="#fff" /></Svg>
        <Svg w={16} h={16} className="ml-[14px]">
          <path d="M1.500 1v14" stroke="#fff" strokeWidth="1.500" />
          <path d="M3 2h6v2h6l-2 3 1 3H8V8H3z" fill="#fff" />
        </Svg>
        <Svg w={16} h={16} className="ml-2">
          <path d="M8.500 3.500h6v11h-6zM10 2h3" stroke="#fff" strokeWidth="1.500" />
          <path d="M1 4h5v4H1z" fill="#fff" />
          <path d="M2 1v3M5 1v3M3.500 8v7" stroke="#fff" />
        </Svg>
        <Svg w={16} h={14} className="ml-2">
          <path d="M0 4h3l4-4v14l-4-4H0z" fill="#fff" />
          <path d="M9 4c1 2 1 4 0 6M11 2.500c2 3 2 6 0 9M13 1c3 4 3 8 0 12" stroke="#fff" />
        </Svg>
        <span className="ml-2 text-[14px] leading-none">あ</span>
        <Svg w={15} h={15} className="ml-[15px]"><path d="M0 0h15v15H0z" fill="#fff" /><path d="M5 1h4l4 12H9zM3 9l3-4v6H3z" fill="#111" /></Svg>
        <time className="ml-[21px] mr-5 text-center text-[12px] leading-[17px]">20:49<br />2017/01/09</time>
      </div>
    </footer>
  );
}

export default function App() {
  return (
    <div className="relative flex h-screen flex-col overflow-hidden bg-white pb-1 pr-[68px] font-['Open_Sans','Noto_Sans_CJK_JP',sans-serif] text-[#444]">
      <TitleBar />
      <RibbonTabs />
      <div className="flex h-[94px] border-b border-[#d4d4d4]">
        <ClipboardGroup />
        <FontGroup />
        <AlignGroup />
        <NumberGroup />
        <StyleGroup />
        <CellsGroup />
        <EditGroup />
        <button type="button" aria-label="リボンを折りたたむ" className="mb-1 ml-auto mr-[10px] self-end">
          <Svg w={10} h={8}><path d="M1 6.500l4-4 4 4" stroke="#666" strokeWidth="2" /></Svg>
        </button>
      </div>
      <FormulaBar />
      <Sheet />
      <SheetTabs />
      <StatusBar />
      <Taskbar />
      <span className="absolute bottom-[2px] right-[3px] font-['Roboto',sans-serif] text-[17px] font-black leading-4 text-[#f26b6b]">che bunbun</span>
    </div>
  );
}
